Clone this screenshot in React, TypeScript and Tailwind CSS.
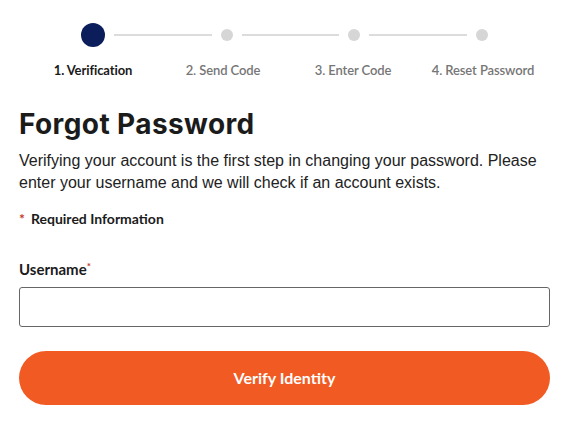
const steps = ["1. Verification", "2. Send Code", "3. Enter Code", "4. Reset Password"];

const labelFont = { fontFamily: "Lato, 'Noto Sans', sans-serif" };

function Stepper() {
  return (
    <div className="pt-[23px]">
      {/* dots and connecting lines */}
      <div className="ml-[81px] flex w-[407px] items-center">
        <div className="h-6 w-6 shrink-0 rounded-full bg-[#0c1d5b]" />
        {[1, 2, 3].map((i) => (
          <div key={i} className="flex flex-1 items-center">
            <div className="mx-[9px] h-[2px] flex-1 bg-[#dcdcdc]" />
            <div className="h-3 w-3 shrink-0 rounded-full bg-[#d6d6d6]" />
          </div>
        ))}
      </div>
      {/* labels */}
      <div className="ml-[28px] mt-[15px] flex" style={labelFont}>
        {steps.map((s, i) => (
          <div
            key={s}
            className={`w-[130px] text-center text-[13px] leading-4 tracking-[-0.1px] ${
              i === 0 ? "font-bold text-[#1a1a1a]" : "font-semibold text-[#767676]"
            }`}
          >
            {s}
          </div>
        ))}
      </div>
    </div>
  );
}

export default function App() {
  return (
    <div className="w-[561px] bg-white">
      <Stepper />
      <div className="pl-[19px] pr-[11px]">
        <h1
          className="mt-[30px] text-[28px] font-bold leading-8 tracking-[0.4px] text-[#1b1b1b]"
          style={{ fontFamily: "Inter, sans-serif" }}
        >
          Forgot Password
        </h1>
        <p
          className="mt-[10px] text-[16px] leading-[22px] text-[#222]"
          style={{ fontFamily: "'Liberation Sans', Arial, sans-serif" }}
        >
          Verifying your account is the first step in changing your password. Please
          enter your username and we will check if an account exists.
        </p>
        <p className="mt-[15px] text-[14px] font-bold leading-5 text-[#1b1b1b]" style={labelFont}>
          <span className="mr-[6px] text-[#c0392b]">*</span>Required Information
        </p>
        <label
          className="mt-[30px] block text-[15px] font-bold leading-5 text-[#1b1b1b]"
          style={labelFont}
        >
          Username<sup className="text-[10px] text-[#c0392b]">*</sup>
        </label>
        <input
          type="text"
          className="mt-[8px] block h-[40px] w-full rounded-[3px] border border-[#666] px-3 outline-none"
        />
        <button
          className="mt-[24px] flex h-[54px] w-full items-center justify-center rounded-full bg-[#f15a22] text-[16px] font-bold text-white"
          style={labelFont}
        >
          Verify Identity
        </button>
      </div>
    </div>
  );
}
